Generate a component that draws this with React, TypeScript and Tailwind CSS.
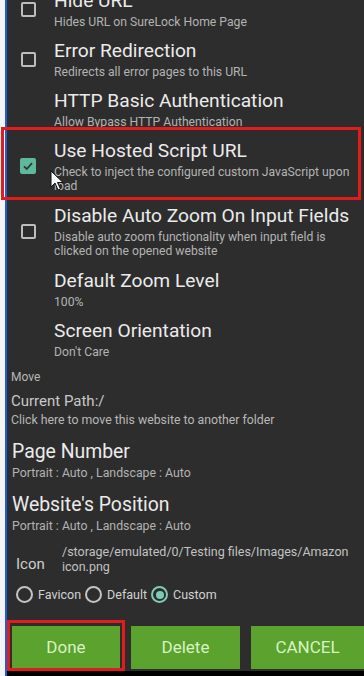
import type { ReactNode } from 'react';

function Checkbox({ checked }: { checked?: boolean }) {
  if (checked) {
    return (
      <div className="flex h-[16px] w-[16px] items-center justify-center rounded-[2px] bg-[#5fb79c]">
        <svg width="12" height="12" viewBox="0 0 12 12">
          <path d="M2 6.3 L4.8 9 L10 3.2" fill="none" stroke="#2b3b34" strokeWidth="1.8" />
        </svg>
      </div>
    );
  }
  return <div className="h-[15px] w-[15px] rounded-[2px] border-2 border-[#bdbdbd]" />;
}

function Row({
  title,
  sub,
  box,
  checked,
  className,
}: {
  title: string;
  sub: ReactNode;
  box?: boolean;
  checked?: boolean;
  className?: string;
}) {
  return (
    <div className={`flex items-center pl-[13px] ${className ?? ''}`}>
      <div className="flex w-[16px] shrink-0 justify-center">{box ? <Checkbox checked={checked} /> : null}</div>
      <div className="ml-[18px] min-w-0 whitespace-nowrap pt-[5px] pb-[5px]">
        <div className="text-[19.2px] leading-[24px] text-[#ebebeb]">{title}</div>
        <div className="mt-[2px] text-[12.2px] leading-[14px] text-[#b3b3b3]">{sub}</div>
      </div>
    </div>
  );
}

function Radio({ label, on }: { label: string; on?: boolean }) {
  return (
    <div className="flex items-center gap-[5px]">
      <div
        className={`flex h-[17px] w-[17px] items-center justify-center rounded-full border-2 ${
          on ? 'border-[#7fcbb3]' : 'border-[#c4c4c4]'
        }`}
      >
        {on ? <div className="h-[8px] w-[8px] rounded-full bg-[#7fcbb3]" /> : null}
      </div>
      <span className="text-[12.5px] text-[#d2d2d2]">{label}</span>
    </div>
  );
}

function Btn({ children, className }: { children: ReactNode; className?: string }) {
  return (
    <div
      className={`flex h-[43px] items-center justify-center bg-[#5ba22e] text-[17px] text-[#d8f3c2] ${className ?? ''}`}
    >
      {children}
    </div>
  );
}

export default function App() {
  return (
    <div className="relative flex h-[676px] w-[364px] overflow-hidden bg-white font-[Roboto,sans-serif]">
      <div className="w-[5px] shrink-0 bg-[#f4f4f4]" />
      <div className="w-[2px] shrink-0 bg-[#1d5ed8]" />
      <div className="flex min-w-0 flex-1 flex-col">
        <div className="flex flex-1 flex-col overflow-hidden bg-[#2d2d2d]">
          <div className="-mt-[16px]">
            <Row box title="Hide URL" sub="Hides URL on SureLock Home Page" />
            <Row box title="Error Redirection" sub="Redirects all error pages to this URL" />
            <Row title="HTTP Basic Authentication" sub="Allow Bypass HTTP Authentication" />
            <Row
              box
              checked
              className="pb-[1px]"
              title="Use Hosted Script URL"
              sub={
                <>
                  Check to inject the configured custom JavaScript upon
                  <br />
                  load
                </>
              }
            />
            <Row
              box
              className="pb-[1px]"
              title="Disable Auto Zoom On Input Fields"
              sub={
                <>
                  Disable auto zoom functionality when input field is
                  <br />
                  clicked on the opened website
                </>
              }
            />
            <Row title="Default Zoom Level" sub="100%" />
            <Row title="Screen Orientation" sub="Don't Care" />
          </div>

          <div className="whitespace-nowrap pl-[4px]">
            <div className="mt-[6px] text-[12px] leading-[14px] text-[#b8b8b8]">Move</div>
            <div className="mt-[8px] text-[15px] leading-[18px] text-[#c8c8c8]">Current Path:/</div>
            <div className="mt-[3px] text-[12.3px] leading-[14px] text-[#b8b8b8]">
              Click here to move this website to another folder
            </div>
          </div>

          <div className="mt-[13px] whitespace-nowrap pl-[5px]">
            <div className="text-[19.4px] leading-[24px] text-[#ebebeb]">Page Number</div>
            <div className="mt-[2px] text-[12.3px] leading-[14px] text-[#b3b3b3]">Portrait : Auto , Landscape : Auto</div>
            <div className="mt-[13px] text-[19.4px] leading-[24px] text-[#ebebeb]">Website's Position</div>
            <div className="mt-[2px] text-[12.3px] leading-[14px] text-[#b3b3b3]">Portrait : Auto , Landscape : Auto</div>
          </div>

          <div className="mt-[10px] flex items-center pl-[9px]">
            <div className="mt-[10px] w-[46px] shrink-0 text-[15px] text-[#cfcfcf]">Icon</div>
            <div className="whitespace-nowrap text-[12.5px] leading-[15px] text-[#c2c2c2]">
              /storage/emulated/0/Testing files/Images/Amazon
              <br />
              icon.png
            </div>
          </div>

          <div className="mt-[10px] flex items-center gap-[4px] pl-[9px]">
            <Radio label="Favicon" />
            <Radio label="Default" />
            <Radio on label="Custom" />
          </div>

          <div className="mt-[22px] flex gap-[11px] pl-[5px]">
            <Btn className="w-[108px]">Done</Btn>
            <Btn className="w-[109px]">Delete</Btn>
            <Btn className="flex-1">CANCEL</Btn>
          </div>
          <div className="h-[4px]" />
        </div>
        <div className="h-[5px] shrink-0 bg-black" />
      </div>

      {/* annotation boxes */}
      <div className="pointer-events-none absolute left-[1px] top-[127px] h-[73px] w-[360px] border-[3px] border-[#e21b1b]" />
      <div className="pointer-events-none absolute left-[7px] top-[620px] h-[51px] w-[118px] border-[3px] border-[#e21b1b]" />

      {/* mouse cursor */}
      <svg className="absolute left-[50px] top-[170px]" width="14" height="22" viewBox="0 0 14 22">
        <path d="M1 1 L1 17 L5 13 L8 20 L10.5 19 L7.5 12.5 L13 12.5 Z" fill="#fafafa" stroke="#111" strokeWidth="1" />
      </svg>
    </div>
  );
}
